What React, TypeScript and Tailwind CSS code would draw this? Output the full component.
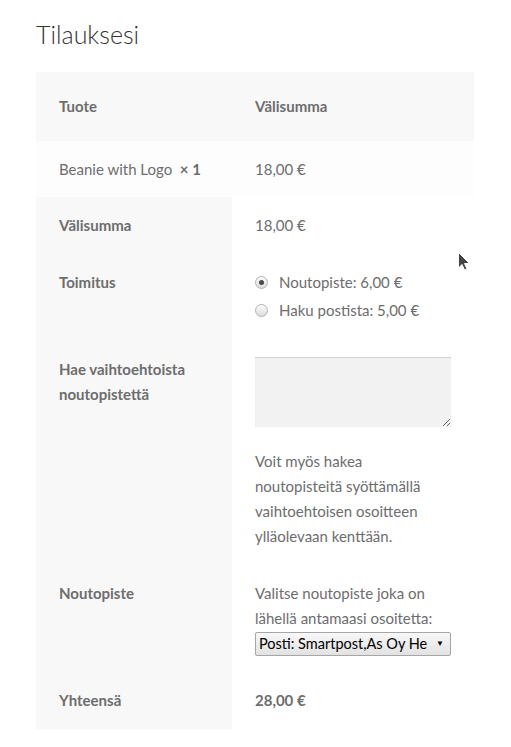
import React from 'react'

function Radio({ checked }: { checked?: boolean }) {
  return (
    <span className="relative inline-flex h-[13px] w-[13px] shrink-0 items-center justify-center rounded-full border border-[#b4b4b4] bg-gradient-to-b from-[#fcfcfc] to-[#dcdcdc]">
      {checked && <span className="h-[5px] w-[5px] rounded-full bg-[#4a4a4a]" />}
    </span>
  )
}

function Cursor() {
  return (
    <svg className="absolute left-[457px] top-[251px]" width="15" height="22" viewBox="0 0 15 22">
      <path d="M1.5 1.5 L1.5 17 L5 13.5 L7.5 19 L10 18 L7.5 12.5 L12.5 12.5 Z" fill="#444" stroke="#fff" strokeWidth="1" />
    </svg>
  )
}

export default function App() {
  const th = 'w-[197px] bg-[#f8f8f8] px-[23px] py-4 text-left font-bold align-top'
  const td = 'px-[23px] py-4 align-top'

  return (
    <div className="relative min-h-[747px] bg-white font-['Lato',sans-serif] text-[15px] leading-[25px] text-[#6d6d6d]">
      <div className="pl-9 pr-[38px] pt-[17px]">
        <h3 className="mb-[21px] text-[25px] font-light leading-[34px] text-[#333]">Tilauksesi</h3>

        <table className="w-[438px] border-collapse">
          <thead>
            <tr className="bg-[#f8f8f8]">
              <th className="h-[69px] w-[197px] px-[23px] text-left font-bold">Tuote</th>
              <th className="h-[69px] px-[23px] text-left font-bold">Välisumma</th>
            </tr>
          </thead>
          <tbody>
            <tr className="bg-[#fdfdfd]">
              <td className="h-[56px] px-[23px]">
                Beanie with Logo&nbsp; <strong className="font-bold">× 1</strong>
              </td>
              <td className="h-[56px] px-[23px]">18,00 €</td>
            </tr>
          </tbody>
          <tfoot>
            <tr>
              <th className={th}>Välisumma</th>
              <td className={td}>18,00 €</td>
            </tr>
            <tr>
              <th className={th}>Toimitus</th>
              <td className={td}>
                <ul className="mb-[2px] flex flex-col gap-[3px]">
                  <li className="flex items-center gap-[11px]">
                    <Radio checked />
                    <span>Noutopiste: 6,00 €</span>
                  </li>
                  <li className="flex items-center gap-[11px]">
                    <Radio />
                    <span>Haku postista: 5,00 €</span>
                  </li>
                </ul>
              </td>
            </tr>
            <tr>
              <th className={th}>
                Hae vaihtoehtoista
                <br />
                noutopistettä
              </th>
              <td className={td}>
                <textarea className="block h-[70px] w-[196px] bg-[#f2f2f2] shadow-[inset_0_1px_1px_rgba(0,0,0,0.15)] outline-none" />
                <p className="mt-[22px] w-[196px]">
                  Voit myös hakea noutopisteitä syöttämällä vaihtoehtoisen osoitteen ylläolevaan kenttään.
                </p>
              </td>
            </tr>
            <tr>
              <th className={th}>Noutopiste</th>
              <td className={td}>
                <p className="w-[196px]">Valitse noutopiste joka on lähellä antamaasi osoitetta:</p>
                <div className="relative mt-px flex h-[24px] w-[196px] items-center rounded-[2px] border border-[#a6a6a6] bg-gradient-to-b from-[#f8f8f8] to-[#e2e2e2]">
                  <span className="whitespace-nowrap pl-[3px] text-[14.5px] leading-[22px] text-black">
                    Posti: Smartpost,As Oy He
                  </span>
                  <span className="pointer-events-none absolute right-[6px] top-[5px] text-[8px] leading-[10px] text-black">▼</span>
                </div>
              </td>
            </tr>
            <tr>
              <th className={th}>Yhteensä</th>
              <td className={`${td} font-bold`}>28,00 €</td>
            </tr>
          </tfoot>
        </table>
      </div>
      <Cursor />
    </div>
  )
}
